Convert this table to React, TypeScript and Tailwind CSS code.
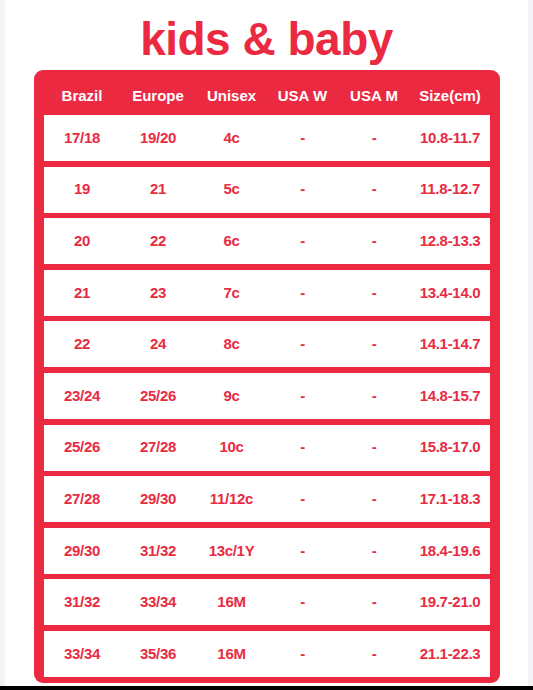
const rows = [
  ["17/18", "19/20", "4c", "-", "-", "10.8-11.7"],
  ["19", "21", "5c", "-", "-", "11.8-12.7"],
  ["20", "22", "6c", "-", "-", "12.8-13.3"],
  ["21", "23", "7c", "-", "-", "13.4-14.0"],
  ["22", "24", "8c", "-", "-", "14.1-14.7"],
  ["23/24", "25/26", "9c", "-", "-", "14.8-15.7"],
  ["25/26", "27/28", "10c", "-", "-", "15.8-17.0"],
  ["27/28", "29/30", "11/12c", "-", "-", "17.1-18.3"],
  ["29/30", "31/32", "13c/1Y", "-", "-", "18.4-19.6"],
  ["31/32", "33/34", "16M", "-", "-", "19.7-21.0"],
  ["33/34", "35/36", "16M", "-", "-", "21.1-22.3"],
];

const headers = ["Brazil", "Europe", "Unisex", "USA W", "USA M", "Size(cm)"];

// column widths picked to line up with the chart
const cols = "grid grid-cols-[77px_75px_72px_70px_73px_79px] items-center text-center";

export default function App() {
  return (
    <div className="flex h-[690px] w-[533px] flex-col bg-[#f4f4f6] font-['Liberation_Sans',Arial,sans-serif]">
      <div className="ml-[5px] flex w-[523px] flex-1 flex-col items-center bg-white pt-[16px]">
        <h1 className="mb-[8px] text-[46px] font-bold leading-[46px] tracking-[-0.5px] text-[#eb2a42]">
          kids &amp; baby
        </h1>

        <div className="w-[466px] rounded-[9px] bg-[#eb2a42] px-[10px] pb-[6px]">
          <div className={`${cols} h-[45px] pt-[8px] text-[15px] font-bold text-white`}>
            {headers.map((h) => (
              <span key={h}>{h}</span>
            ))}
          </div>

          <div className="flex flex-col gap-[5.6px]">
            {rows.map((r, i) => (
              <div key={i} className={`${cols} h-[46px] bg-white text-[15px] font-bold tracking-[-0.3px] text-[#e82b43]`}>
                {r.map((c, j) => (
                  <span key={j}>{c}</span>
                ))}
              </div>
            ))}
          </div>
        </div>
      </div>
      <div className="h-[4px] bg-black" />
    </div>
  );
}
